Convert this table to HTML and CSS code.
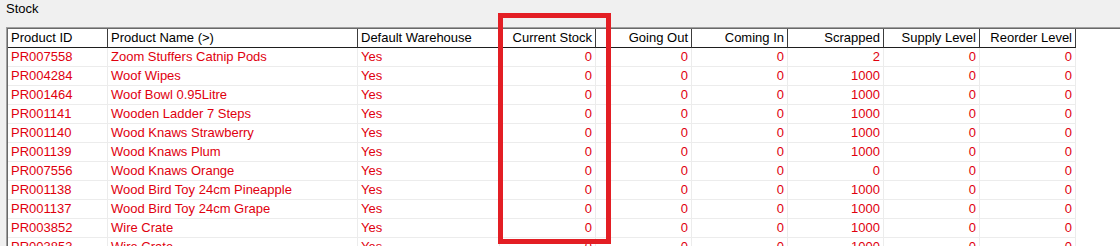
FILE: index.html
```html
<!DOCTYPE html>
<html>
<head>
<meta charset="utf-8">
<link rel="stylesheet" href="styles.css">
</head>
<body>
<div class="page">
  <div class="title">Stock</div>
  <div class="grid">
    <div class="row head">
      <div class="c l">Product ID</div>
      <div class="c l">Product Name (&gt;)</div>
      <div class="c l">Default Warehouse</div>
      <div class="c r">Current Stock</div>
      <div class="c r">Going Out</div>
      <div class="c r">Coming In</div>
      <div class="c r">Scrapped</div>
      <div class="c r">Supply Level</div>
      <div class="c r">Reorder Level</div>
      <div class="c fill"></div>
    </div>
    <div class="row"><div class="c l">PR007558</div><div class="c l">Zoom Stuffers Catnip Pods</div><div class="c l">Yes</div><div class="c r">0</div><div class="c r">0</div><div class="c r">0</div><div class="c r">2</div><div class="c r">0</div><div class="c r">0</div><div class="c fill"></div></div>
    <div class="row"><div class="c l">PR004284</div><div class="c l">Woof Wipes</div><div class="c l">Yes</div><div class="c r">0</div><div class="c r">0</div><div class="c r">0</div><div class="c r">1000</div><div class="c r">0</div><div class="c r">0</div><div class="c fill"></div></div>
    <div class="row"><div class="c l">PR001464</div><div class="c l">Woof Bowl 0.95Litre</div><div class="c l">Yes</div><div class="c r">0</div><div class="c r">0</div><div class="c r">0</div><div class="c r">1000</div><div class="c r">0</div><div class="c r">0</div><div class="c fill"></div></div>
    <div class="row"><div class="c l">PR001141</div><div class="c l">Wooden Ladder 7 Steps</div><div class="c l">Yes</div><div class="c r">0</div><div class="c r">0</div><div class="c r">0</div><div class="c r">1000</div><div class="c r">0</div><div class="c r">0</div><div class="c fill"></div></div>
    <div class="row"><div class="c l">PR001140</div><div class="c l">Wood Knaws Strawberry</div><div class="c l">Yes</div><div class="c r">0</div><div class="c r">0</div><div class="c r">0</div><div class="c r">1000</div><div class="c r">0</div><div class="c r">0</div><div class="c fill"></div></div>
    <div class="row"><div class="c l">PR001139</div><div class="c l">Wood Knaws Plum</div><div class="c l">Yes</div><div class="c r">0</div><div class="c r">0</div><div class="c r">0</div><div class="c r">1000</div><div class="c r">0</div><div class="c r">0</div><div class="c fill"></div></div>
    <div class="row"><div class="c l">PR007556</div><div class="c l">Wood Knaws Orange</div><div class="c l">Yes</div><div class="c r">0</div><div class="c r">0</div><div class="c r">0</div><div class="c r">0</div><div class="c r">0</div><div class="c r">0</div><div class="c fill"></div></div>
    <div class="row"><div class="c l">PR001138</div><div class="c l">Wood Bird Toy 24cm Pineapple</div><div class="c l">Yes</div><div class="c r">0</div><div class="c r">0</div><div class="c r">0</div><div class="c r">1000</div><div class="c r">0</div><div class="c r">0</div><div class="c fill"></div></div>
    <div class="row"><div class="c l">PR001137</div><div class="c l">Wood Bird Toy 24cm Grape</div><div class="c l">Yes</div><div class="c r">0</div><div class="c r">0</div><div class="c r">0</div><div class="c r">1000</div><div class="c r">0</div><div class="c r">0</div><div class="c fill"></div></div>
    <div class="row"><div class="c l">PR003852</div><div class="c l">Wire Crate</div><div class="c l">Yes</div><div class="c r">0</div><div class="c r">0</div><div class="c r">0</div><div class="c r">1000</div><div class="c r">0</div><div class="c r">0</div><div class="c fill"></div></div>
    <div class="row"><div class="c l">PR003853</div><div class="c l">Wire Crate</div><div class="c l">Yes</div><div class="c r">0</div><div class="c r">0</div><div class="c r">0</div><div class="c r">1000</div><div class="c r">0</div><div class="c r">0</div><div class="c fill"></div></div>
  </div>
  <div class="highlight"></div>
</div>
</body>
</html>
```
FILE: styles.css
```css
html, body {
  margin: 0;
  padding: 0;
  background: #f0f0f0;
  overflow: hidden;
}
.page {
  position: relative;
  width: 1120px;
  height: 246px;
  overflow: hidden;
  font-family: "Liberation Sans", Arial, sans-serif;
  font-size: 13px;
  color: #000;
}
.title {
  height: 27px;
  padding-left: 6px;
  line-height: 17px;
}
.grid {
  margin-left: 6px;
  background: #fff;
  border-top: 1px solid #a0a0a0;
  border-left: 1px solid #a0a0a0;
  box-shadow: inset 1px 1px 0 #696969;
  padding: 1px 0 0 1px;
}
.row {
  display: grid;
  grid-template-columns: 100px 250px 142px repeat(6, 96px) 1fr;
  height: 19px;
}
.c {
  box-sizing: border-box;
  height: 19px;
  line-height: 18px;
  border-right: 1px solid #ececec;
  border-bottom: 1px solid #ececec;
  color: #e0000e;
  white-space: nowrap;
  overflow: hidden;
}
.l { padding-left: 3px; }
.r { padding-right: 3px; text-align: right; }
.head .c {
  line-height: 17px;
  color: #000;
  border-right: 1px solid #3c3c3c;
  border-bottom: 1px solid #1e1e1e;
}
.head .fill, .fill {
  border: none;
}
.highlight {
  position: absolute;
  left: 498px;
  top: 13px;
  width: 103px;
  height: 221px;
  border: 5px solid #e31e24;
}
```
